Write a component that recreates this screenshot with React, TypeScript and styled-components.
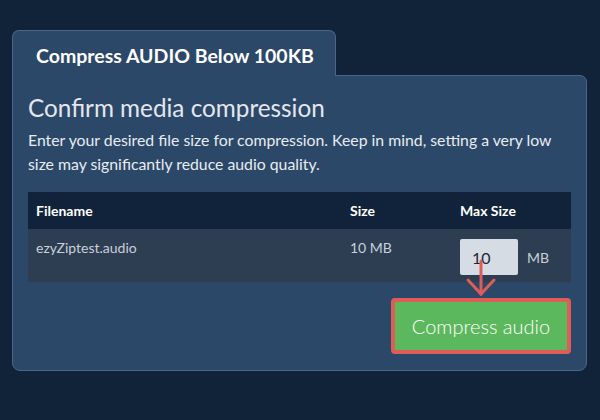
import React from 'react';
import styled, { createGlobalStyle } from 'styled-components';

const GlobalStyle = createGlobalStyle`
  html, body {
    margin: 0;
    padding: 0;
    background: #112338;
  }
  body {
    font-family: Lato, "Open Sans", sans-serif;
  }
`;

const Page = styled.div`
  width: 600px;
  height: 420px;
  background: #112338;
  padding: 30px 13px 0 12px;
  box-sizing: border-box;
`;

const Tab = styled.div`
  width: 324px;
  height: 46px;
  box-sizing: border-box;
  background: #2c4868;
  border: 1px solid #4b6788;
  border-bottom: none;
  border-radius: 7px 7px 0 0;
  color: #ffffff;
  font-weight: 700;
  font-size: 19.5px;
  line-height: 24px;
  padding: 13px 0 0 23px;
  position: relative;
  z-index: 1;
  margin-bottom: -1px;
`;

const Panel = styled.div`
  background: #2c4868;
  border: 1px solid #4b6788;
  border-radius: 0 7px 8px 8px;
  padding: 17px 15px 16px 15px;
  height: 296px;
  box-sizing: border-box;
`;

const Heading = styled.h2`
  margin: 0;
  font-size: 24.3px;
  font-weight: 400;
  color: #e3e7ee;
  line-height: 30px;
`;

const Intro = styled.p`
  margin: 5px 0 16px;
  font-size: 15.8px;
  line-height: 24px;
  color: #e8ecf1;
`;

const Table = styled.div`
  display: grid;
  grid-template-columns: 314px 110px 1fr;
`;

const HeadCell = styled.div`
  background: #10233a;
  color: #ffffff;
  font-weight: 700;
  font-size: 14px;
  height: 37px;
  display: flex;
  align-items: center;
  padding-left: 8px;
`;

const Cell = styled.div`
  background: #2d3e53;
  color: #c9d0d9;
  font-size: 14px;
  height: 53px;
  padding: 10px 0 0 8px;
  box-sizing: border-box;
`;

const SizeField = styled.div`
  position: relative;
  display: flex;
  align-items: center;
  gap: 9px;
`;

const SizeInput = styled.div`
  width: 58px;
  height: 36px;
  box-sizing: border-box;
  background: #d6dce4;
  border-radius: 2px;
  color: #1f2733;
  font-size: 16px;
  display: flex;
  align-items: center;
  padding-left: 12px;
`;

const Unit = styled.span`
  color: #c9d0d9;
  font-size: 14px;
`;

const Arrow = styled.svg`
  position: absolute;
  left: 7px;
  top: 22px;
  overflow: visible;
`;

const Actions = styled.div`
  display: flex;
  justify-content: flex-end;
  margin-top: 16px;
`;

const Highlight = styled.div`
  border: 4px solid #df5d58;
  border-radius: 4px;
  background: #df5d58;
`;

const CompressButton = styled.button`
  width: 172px;
  height: 48px;
  border: none;
  border-radius: 1px;
  background: #5cb85c;
  color: #ffffff;
  font-family: Lato, "Open Sans", sans-serif;
  font-weight: 300;
  font-size: 20px;
  display: block;
`;

const App: React.FC = () => (
  <Page>
    <GlobalStyle />
    <Tab>Compress AUDIO Below 100KB</Tab>
    <Panel>
      <Heading>Confirm media compression</Heading>
      <Intro>
        Enter your desired file size for compression. Keep in mind, setting a very low size may
        significantly reduce audio quality.
      </Intro>
      <Table>
        <HeadCell>Filename</HeadCell>
        <HeadCell>Size</HeadCell>
        <HeadCell>Max Size</HeadCell>
        <Cell>ezyZiptest.audio</Cell>
        <Cell>10 MB</Cell>
        <Cell>
          <SizeField>
            <SizeInput>10</SizeInput>
            <Unit>MB</Unit>
            <Arrow width="30" height="36" viewBox="0 0 30 36">
              <g stroke="#df5d58" strokeWidth="3" fill="none" strokeLinecap="round">
                <line x1="14" y1="0" x2="14" y2="33" />
                <polyline points="1,19 14,33 27,19" />
              </g>
            </Arrow>
          </SizeField>
        </Cell>
      </Table>
      <Actions>
        <Highlight>
          <CompressButton type="button">Compress audio</CompressButton>
        </Highlight>
      </Actions>
    </Panel>
  </Page>
);

export default App;
